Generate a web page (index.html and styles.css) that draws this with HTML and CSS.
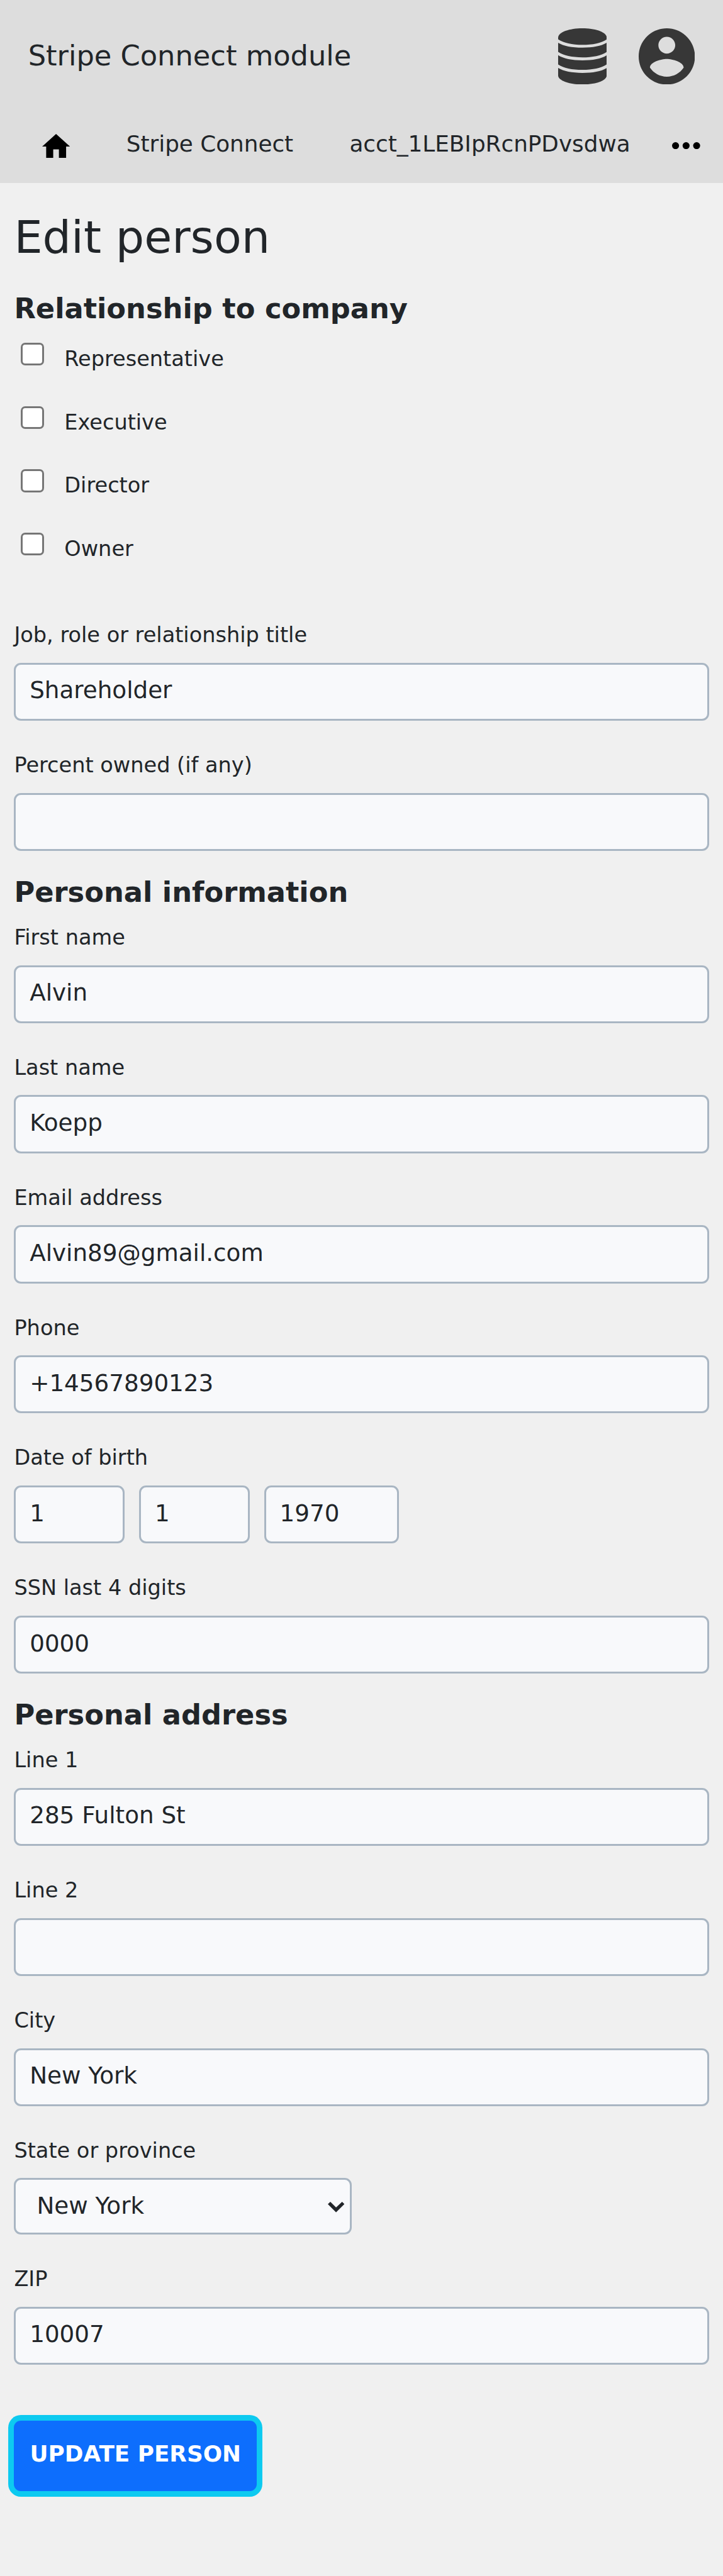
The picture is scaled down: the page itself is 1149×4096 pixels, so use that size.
FILE: index.html
```html
<!DOCTYPE html>
<html lang="en">
<head>
<meta charset="utf-8">
<title>Edit person</title>
<link rel="stylesheet" href="styles.css">
</head>
<body>
<header class="header">
  <div class="title-bar">
    <span class="site-title">Stripe Connect module</span>
    <svg class="icon-database" viewBox="31 24 290 336" preserveAspectRatio="none">
      <path d="M31 80C31 46 100 24 176 24S321 46 321 80V90C290 112 237 123 176 123S62 112 31 90Z"/>
      <path d="M31 110C62 130 115 139.500 176 139.500S290 130 321 110V165C290 187 237 197.500 176 197.500S62 187 31 165Z"/>
      <path d="M31 185C62 206 115 215.500 176 215.500S290 206 321 185V240C290 262 237 272.500 176 272.500S62 262 31 240Z"/>
      <path d="M31 261C62 281 115 290.500 176 290.500S290 281 321 261V306C321 337 252 360 176 360S31 337 31 306Z"/>
    </svg>
    <svg class="icon-account" viewBox="2 2 20 20">
      <path d="M12 2C6.480 2 2 6.480 2 12s4.480 10 10 10 10-4.480 10-10S17.520 2 12 2zm0 3c1.660 0 3 1.340 3 3s-1.340 3-3 3-3-1.340-3-3 1.340-3 3-3zm0 14.200c-2.500 0-4.710-1.280-6-3.220.030-1.990 4-3.080 6-3.080 1.990 0 5.970 1.090 6 3.080-1.290 1.940-3.500 3.220-6 3.220z"/>
    </svg>
  </div>
  <nav class="nav">
    <svg class="icon-home" viewBox="43 50 166 143"><path d="M126 50L209 125H186V193H143V142H109V193H67V125H43Z"/></svg>
    <a class="nav-link">Stripe Connect</a>
    <a class="nav-link">acct_1LEBIpRcnPDvsdwa</a>
    <svg class="icon-more" viewBox="0 0 56 14"><circle cx="7" cy="7" r="7"/><circle cx="28" cy="7" r="7"/><circle cx="49" cy="7" r="7"/></svg>
  </nav>
</header>
<main class="content">
  <h1 class="page-title">Edit person</h1>
  <form>
    <h2 class="section-title">Relationship to company</h2>
    <div class="checks">
      <label class="check"><input type="checkbox" class="checkbox"><span>Representative</span></label>
      <label class="check"><input type="checkbox" class="checkbox"><span>Executive</span></label>
      <label class="check"><input type="checkbox" class="checkbox"><span>Director</span></label>
      <label class="check"><input type="checkbox" class="checkbox"><span>Owner</span></label>
    </div>
    <div class="fields">
      <div class="field"><label class="label">Job, role or relationship title</label><input class="input" type="text" value="Shareholder"></div>
      <div class="field"><label class="label">Percent owned (if any)</label><input class="input" type="text"></div>
    </div>
    <h2 class="section-title section-next">Personal information</h2>
    <div class="fields">
      <div class="field"><label class="label">First name</label><input class="input" type="text" value="Alvin"></div>
      <div class="field"><label class="label">Last name</label><input class="input" type="text" value="Koepp"></div>
      <div class="field"><label class="label">Email address</label><input class="input" type="text" value="Alvin89@gmail.com"></div>
      <div class="field"><label class="label">Phone</label><input class="input" type="text" value="+14567890123"></div>
      <div class="field"><label class="label">Date of birth</label>
        <div class="date">
          <input class="input date-part" type="text" value="1">
          <input class="input date-part" type="text" value="1">
          <input class="input date-year" type="text" value="1970">
        </div>
      </div>
      <div class="field"><label class="label">SSN last 4 digits</label><input class="input" type="text" value="0000"></div>
    </div>
    <h2 class="section-title section-next">Personal address</h2>
    <div class="fields">
      <div class="field"><label class="label">Line 1</label><input class="input" type="text" value="285 Fulton St"></div>
      <div class="field"><label class="label">Line 2</label><input class="input" type="text"></div>
      <div class="field"><label class="label">City</label><input class="input" type="text" value="New York"></div>
      <div class="field"><label class="label">State or province</label>
        <div class="select-wrap">
          <select class="input select"><option>New York</option></select>
          <svg class="chevron" viewBox="156 129 99 63"><path d="M171 129L205 163L241 129L255 143L205 192L156 143Z"/></svg>
        </div>
      </div>
      <div class="field"><label class="label">ZIP</label><input class="input" type="text" value="10007"></div>
    </div>
    <button class="submit" type="button">UPDATE PERSON</button>
  </form>
</main>
</body>
</html>
```
FILE: styles.css
```css
* {
  box-sizing: border-box;
}

body {
  margin: 0;
  min-height: 4096px;
  background: #f0f0f0;
  color: #212529;
  font-family: "DejaVu Sans", sans-serif;
}

/* Header */
.header {
  height: 290.7px;
  background: #ddd;
}

.title-bar {
  display: flex;
  align-items: center;
  height: 178.4px;
  padding: 0 44.7px;
  fill: #373737;
}

.site-title {
  flex: 1;
  padding-bottom: 2px;
  font-size: 44.73px;
}

.icon-database {
  width: 77.2px;
  height: 89.4px;
  margin-right: 51.2px;
}

.icon-account {
  width: 89.4px;
  height: 89.4px;
}

.nav {
  display: flex;
  align-items: flex-start;
  gap: 89.3px;
  padding: 25.3px 36.7px 0 67.3px;
  font-size: 35.78px;
  line-height: 50.3px;
}

.nav-link {
  white-space: nowrap;
}

.icon-home {
  flex: none;
  width: 44.2px;
  height: 38.1px;
  margin-top: 9.4px;
}

.icon-more {
  flex: none;
  width: 44.7px;
  height: 11.2px;
  margin: 22.5px 0 0 -23px;
}

/* Form */
.content {
  padding: 44.9px 22.4px 0;
}

.page-title {
  margin: 0 0 43.1px;
  font-size: 71.57px;
  font-weight: 400;
  line-height: 84px;
}

.section-title {
  margin: 0;
  font-size: 44.73px;
  font-weight: 700;
  line-height: 56px;
}

.section-next {
  margin: 38.1px 0 17.9px;
}

.checks {
  margin-bottom: 63.1px;
}

.check {
  display: flex;
  height: 100.6px;
  padding: 26.4px 0 0 11px;
  font-size: 33.55px;
  line-height: 52.3px;
}

.checkbox {
  appearance: none;
  width: 36.3px;
  height: 36.3px;
  margin: 0 32.6px 0 0;
  border: 3px solid #767676;
  border-radius: 7px;
  background: #fff;
}

.fields {
  display: flex;
  flex-direction: column;
  gap: 45px;
}

.field {
  display: flex;
  flex-direction: column;
  gap: 18.4px;
}

.label {
  padding-top: 1px;
  font-size: 33.55px;
  line-height: 50.3px;
}

.input {
  width: 100%;
  height: 92.2px;
  margin: 0;
  padding: 0 21.8px 5px;
  border: 3px solid #a9b6c3;
  border-radius: 11.2px;
  background: #f8f9fb;
  color: #212529;
  font: 37.27px "DejaVu Sans", sans-serif;
}

.date {
  display: flex;
  gap: 22.6px;
}

.date-part {
  width: 176.1px;
}

.date-year {
  width: 214.7px;
}

.select-wrap {
  position: relative;
  width: 536.2px;
  height: 89.4px;
}

.select {
  appearance: none;
  display: block;
  height: 89.4px;
  padding: 0 33px 2.8px;
}

.chevron {
  position: absolute;
  right: 11.6px;
  top: 37.6px;
  width: 26.4px;
  height: 16.8px;
  fill: #212529;
}

.submit {
  display: block;
  width: 385.8px;
  height: 111.8px;
  margin: 89.3px 0 0;
  padding: 0 0 7.6px;
  border: 0;
  border-radius: 11.2px;
  background: #0d6efd;
  box-shadow: 0 0 0 8.95px #0dcaf0;
  color: #fff;
  font: 700 35.78px "DejaVu Sans", sans-serif;
  white-space: nowrap;
}
```
